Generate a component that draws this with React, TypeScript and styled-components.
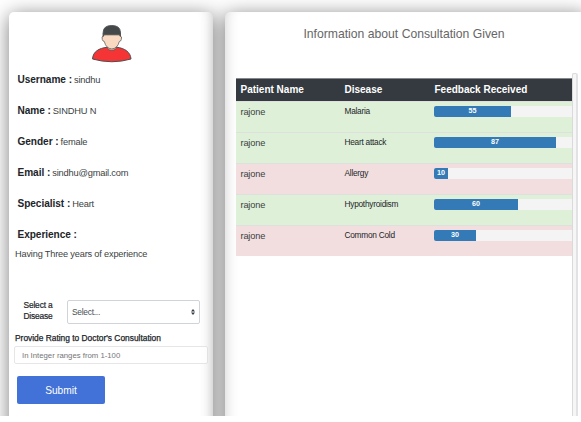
import React from "react";
import styled, { createGlobalStyle } from "styled-components";

const GlobalStyle = createGlobalStyle`
  *, *::before, *::after { box-sizing: border-box; }
  body {
    margin: 0;
    background: #fff;
    overflow: hidden;
    font-family: "Liberation Sans", Arial, sans-serif;
    color: #212529;
  }
`;

const Page = styled.main`
  display: flex;
  gap: 12px;
  width: 593px;
  height: 416px;
  padding: 12px 0 0 9px;
  overflow: hidden;
`;

const Card = styled.section<{ $shade: number }>`
  height: 440px;
  border-radius: 5px;
  background: #fff;
  box-shadow: 0 3px 20px rgba(0, 0, 0, 0.52),
    inset ${(p) => p.$shade}px 0 14px -12px rgba(0, 0, 0, 0.2);
`;

const ProfileCard = styled(Card)`
  flex: 0 0 204px;
  padding: 12px 5px 0 6px;
`;

const ReportCard = styled(Card)`
  flex: 0 0 362px;
  padding: 15px 9px 0 11px;
`;

const Avatar = styled.svg`
  display: block;
  width: 42px;
  height: 39px;
  margin: 0 0 0 76px;
`;

const Details = styled.dl`
  margin: 2px 0 0 2.5px;
`;

const Detail = styled.div`
  display: flex;
  align-items: baseline;
  gap: 2px;
  height: 31px;
  padding-top: 9px;
  line-height: 12px;
  white-space: nowrap;
`;

const Term = styled.dt`
  font-size: 10.1px;
  letter-spacing: -0.05px;
  font-weight: 700;
`;

const Value = styled.dd`
  margin: 0;
  font-size: 9.3px;
  letter-spacing: -0.2px;
  color: #3b3f43;
`;

const Experience = styled.p`
  margin: -3px 0 0;
  font-size: 9.2px;
  letter-spacing: -0.17px;
  line-height: 12px;
  color: #3b3f43;
`;

const DiseaseField = styled.div`
  display: flex;
  align-items: flex-start;
  gap: 6px;
  margin-top: 40px;
`;

const DiseaseLabel = styled.label`
  width: 46px;
  font-size: 8.4px;
  letter-spacing: -0.15px;
  line-height: 11px;
  text-align: center;
  -webkit-text-stroke: 0.2px #212529;
`;

const SelectBox = styled.div`
  display: flex;
  align-items: center;
  justify-content: space-between;
  width: 133px;
  height: 24px;
  padding: 0 4px;
  border: 1px solid #ced4da;
  border-radius: 2px;
  background: #fff;
  font-size: 8.4px;
  letter-spacing: -0.25px;
  color: #495057;
`;

const Arrows = styled.svg`
  width: 4px;
  height: 6px;
`;

const RatingLabel = styled.label`
  display: block;
  margin-top: 8px;
  font-size: 8.4px;
  line-height: 12px;
  -webkit-text-stroke: 0.25px #212529;
`;

const RatingInput = styled.input`
  display: block;
  width: 194px;
  height: 18px;
  margin: 2px 0 0 -1px;
  padding: 0 7px;
  border: 1px solid #e6e6e6;
  border-radius: 2px;
  background: #fff;
  font: 7.75px "Liberation Sans", Arial, sans-serif;
  &::placeholder { color: #757575; opacity: 1; }
`;

const SubmitButton = styled.button`
  display: block;
  width: 88px;
  height: 28px;
  margin: 12px 0 0 2px;
  padding: 0;
  border: 0;
  border-radius: 2px;
  background: #4272d7;
  color: #fff;
  font: 10.2px "Liberation Sans", Arial, sans-serif;
`;

const Title = styled.h1`
  margin: 0 6px 0 0;
  font-size: 12.2px;
  font-weight: 400;
  line-height: 15px;
  text-align: center;
  white-space: nowrap;
  color: #666;
`;

const ScrollArea = styled.div`
  display: flex;
  align-items: flex-start;
  margin-top: 31px;
`;

const TableView = styled.div`
  flex: 0 0 336px;
  margin-top: 5px;
  overflow: hidden;
`;

const Track = styled.div`
  flex: 0 0 6px;
  height: 400px;
  border: 1px solid #dadada;
  border-right: 2px solid #e2e2e2;
  border-radius: 2px 2px 0 0;
  background: #f6f6f6;
`;

const Table = styled.table`
  width: 344px;
  table-layout: fixed;
  border-collapse: separate;
  border-spacing: 0;
  text-align: left;
`;

const HeadCell = styled.th<{ $width?: number }>`
  width: ${(p) => (p.$width ? `${p.$width}px` : "auto")};
  height: 23px;
  padding: 0 4.5px;
  border-top: 1px solid #85888c;
  background: #343a40;
  color: #fff;
  font-size: 10px;
  line-height: 12px;
`;

const Row = styled.tr<{ $good: boolean }>`
  background: ${(p) => (p.$good ? "#dff0d8" : "#f2dede")};
`;

const Cell = styled.td<{ $small?: boolean }>`
  height: 31px;
  padding: ${(p) => (p.$small ? "3px" : "4px")} 0 0 4.5px;
  border-top: 1px solid #dde0dd;
  vertical-align: top;
  font-size: ${(p) => (p.$small ? "8.3px" : "9.2px")};
  letter-spacing: ${(p) => (p.$small ? "-0.25px" : "-0.15px")};
  line-height: 12px;
  color: ${(p) => (p.$small ? "#212529" : "#3b3f43")};
`;

const MeterCell = styled(Cell)`
  padding-left: 4px;
`;

const Progress = styled.div`
  width: 140px;
  height: 11px;
  border-radius: 2px;
  overflow: hidden;
  background: #f4f4f4;
`;

const Bar = styled.div`
  height: 100%;
  background: #337ab7;
  color: #fff;
  font-size: 7.2px;
  font-weight: 700;
  line-height: 10px;
  letter-spacing: 0;
  text-align: center;
`;

const details = [
  ["Username :", "sindhu"],
  ["Name :", "SINDHU N"],
  ["Gender :", "female"],
  ["Email :", "sindhu@gmail.com"],
  ["Specialist :", "Heart"],
  ["Experience :", ""],
];

const feedback = [
  { patient: "rajone", disease: "Malaria", score: 55 },
  { patient: "rajone", disease: "Heart attack", score: 87 },
  { patient: "rajone", disease: "Allergy", score: 10 },
  { patient: "rajone", disease: "Hypothyroidism", score: 60 },
  { patient: "rajone", disease: "Common Cold", score: 30 },
];

export default function App() {
  return (
    <>
      <GlobalStyle />
      <Page>
        <ProfileCard $shade={-12}>
          <Avatar viewBox="0 0 42 39" stroke="#4a4e50" strokeLinejoin="round">
            <path d="M1.5 35C2 27.500 8 24.200 16 23.300H26C33.500 24.200 39.500 28 40 35Q21 40.500 1.500 35Z" fill="#f53535" />
            <path d="M16.500 21V24.500Q20.800 28.500 25.200 24.500V21Z" fill="#e5bda2" strokeWidth="0.700" />
            <path d="M12.200 12Q10.300 12.300 11.300 15.500Q11.800 17.500 13.300 17.500Q15 24.500 20.800 25Q26.600 24.500 28.300 17.500Q29.800 17.500 30.300 15.500Q31.300 12.300 29.400 12V9H12.200Z" fill="#f9d9c1" strokeWidth="0.700" />
            <path d="M12.200 12.500V8Q12.500 1.500 20.800 1.500Q29.100 1.500 29.400 8V12.500L28.500 10.800H13.100Z" fill="#444849" strokeWidth="0.900" />
          </Avatar>
          <Details>
            {details.map(([term, value]) => (
              <Detail key={term}>
                <Term>{term}</Term>
                <Value>{value}</Value>
              </Detail>
            ))}
          </Details>
          <Experience>Having Three years of experience</Experience>
          <DiseaseField>
            <DiseaseLabel>Select a Disease</DiseaseLabel>
            <SelectBox>
              <span>Select...</span>
              <Arrows viewBox="0 0 4 6" fill="#343a40">
                <path d="M2 0L4 2.600H0ZM2 6L0 3.400H4Z" />
              </Arrows>
            </SelectBox>
          </DiseaseField>
          <RatingLabel htmlFor="rating">Provide Rating to Doctor's Consultation</RatingLabel>
          <RatingInput id="rating" placeholder="In Integer ranges from 1-100" />
          <SubmitButton type="button">Submit</SubmitButton>
        </ProfileCard>
        <ReportCard $shade={12}>
          <Title>Information about Consultation Given</Title>
          <ScrollArea>
            <TableView>
              <Table>
                <thead>
                  <tr>
                    <HeadCell $width={104}>Patient Name</HeadCell>
                    <HeadCell $width={90}>Disease</HeadCell>
                    <HeadCell>Feedback Received</HeadCell>
                  </tr>
                </thead>
                <tbody>
                  {feedback.map((f) => (
                    <Row key={f.disease} $good={f.score > 50}>
                      <Cell>{f.patient}</Cell>
                      <Cell $small>{f.disease}</Cell>
                      <MeterCell>
                        <Progress>
                          <Bar style={{ width: `${f.score}%` }}>{f.score}</Bar>
                        </Progress>
                      </MeterCell>
                    </Row>
                  ))}
                </tbody>
              </Table>
            </TableView>
            <Track />
          </ScrollArea>
        </ReportCard>
      </Page>
    </>
  );
}
